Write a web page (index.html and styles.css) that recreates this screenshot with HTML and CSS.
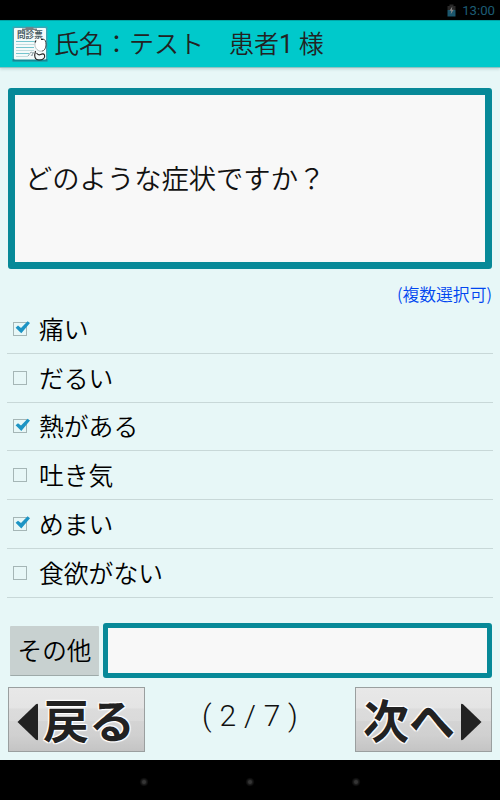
FILE: index.html
```html
<!DOCTYPE html>
<html lang="ja">
<head>
    <meta charset="UTF-8">
    <meta name="viewport" content="width=device-width, initial-scale=1.0">
    <title>問診票</title>
    <link rel="stylesheet" href="styles.css">
</head>
<body>
    <div class="status-bar">
        <svg class="battery" width="9" height="13" viewBox="0 0 9 13">
            <path d="M2.5 0.5h4v1.5h2v4h-8v-4h2z" fill="#292929"/>
            <path d="M0.5 6h8v6.5h-8z" fill="#1b566d"/>
            <path d="M5.3 2.5L2.5 6.8h1.8l-0.6 3.4 3-4.5H4.9z" fill="#8a8a8a"/>
        </svg>
        <span class="clock">13:00</span>
    </div>

    <header class="header">
        <svg class="app-icon" width="36" height="36" viewBox="0 0 36 36">
            <rect x="0.5" y="0.5" width="35" height="35" rx="1" fill="#3aa7b5"/>
            <rect x="0.5" y="33" width="35" height="2.5" fill="#128995"/>
            <rect x="2" y="2" width="32" height="31.5" rx="1" fill="#f4fafa"/>
            <path d="M10 4V2.5h3.5V1.2h8v1.3H25V4z" fill="#777f82"/>
            <text x="5" y="11.5" class="icon-text">問診票</text>
            <path d="M4 15.5h20M4 21.5h18M4 27.5h13" stroke="#74c5ce" stroke-width="1.2"/>
            <path d="M4 18.5h19M4 24.5h18M4 30.5h12" stroke="#c3dddf"/>
            <path d="M23.500 14c-2 3-1 7 1 9 2 2 5 3 7 1 3-3 2-8 0-10z" fill="#fff"/>
            <path d="M24 14.500c-2 3-1 7 1 9 1.500 1.500 3.500 2 5 1.500" fill="none" stroke="#a9b5b8" stroke-width="0.9"/>
            <path d="M30.500 13c3 0 3.500 3 3.500 5.500 0 4-2 6.500-4 6.500" fill="none" stroke="#333" stroke-width="0.9"/>
            <path d="M23 16.500l1-2M29 13.500h2M23.500 25c-1.500 5-1 9 3.500 9 4 0 6.500-2 5.500-5-1-2-3-1-4-0.500-1 0.500-3 0-4-1.500" fill="none" stroke="#222" stroke-width="1.1"/>
            <path d="M16 30l3-4 2 1-1 3M19 30l3-4" fill="none" stroke="#9aa9ad"/>
        </svg>
        <h1 class="patient">氏名：テスト　患者<span class="num">1</span> 様</h1>
    </header>

    <main class="content">
        <div class="question">どのような症状ですか？</div>
        <div class="hint">(複数選択可)</div>

        <div class="options">
            <label class="option"><input type="checkbox" checked><span>痛い</span></label>
            <label class="option"><input type="checkbox"><span>だるい</span></label>
            <label class="option"><input type="checkbox" checked><span>熱がある</span></label>
            <label class="option"><input type="checkbox"><span>吐き気</span></label>
            <label class="option"><input type="checkbox" checked><span>めまい</span></label>
            <label class="option"><input type="checkbox"><span>食欲がない</span></label>
        </div>

        <div class="other">
            <button class="other-btn">その他</button>
            <input type="text" class="other-input">
        </div>

        <div class="pager">
            <button class="nav-btn">
                <svg width="22" height="38" viewBox="0 0 22 38"><path d="M0.5 19L19 1.2Q21 0 21 2V36Q21 38 19 36.8z" fill="#222"/></svg>
                <span>戻る</span>
            </button>
            <div class="page">( 2 / 7 )</div>
            <button class="nav-btn next">
                <span>次へ</span>
                <svg width="22" height="38" viewBox="0 0 22 38"><path d="M21.5 19L3 1.2Q1 0 1 2V36Q1 38 3 36.8z" fill="#222"/></svg>
            </button>
        </div>
    </main>

    <footer class="system-bar">
        <span class="dot"></span>
        <span class="dot"></span>
        <span class="dot"></span>
    </footer>
</body>
</html>
```
FILE: styles.css
```css
* {
    box-sizing: border-box;
}
body {
    margin: 0;
    width: 500px;
    height: 800px;
    display: flex;
    flex-direction: column;
    overflow: hidden;
    background-color: #e7f7f7;
    color: #111;
    font-family: "Noto Sans CJK JP", sans-serif;
    font-weight: 350;
}
button, input {
    font-family: inherit;
    font-weight: inherit;
    margin: 0;
    padding: 0;
}
.status-bar {
    height: 20px;
    background-color: #000;
    display: flex;
    justify-content: flex-end;
    align-items: center;
    padding: 2px 5px 0 0;
    gap: 6px;
}
.battery {
    margin-top: -2px;
}
.clock {
    font-family: Roboto, sans-serif;
    font-weight: 400;
    font-size: 13.2px;
    line-height: 18px;
    color: #1d5c75;
}
.header {
    height: 48px;
    display: flex;
    align-items: center;
    padding-left: 12px;
    background-color: #00c9cb;
    border-top: 1px solid #00a5a7;
    border-bottom: 1px solid #8fc4c4;
    box-shadow: 0 1px 3px rgba(0, 60, 60, 0.2);
}
.icon-text {
    font-size: 8.6px;
    font-weight: 700;
    fill: #465a62;
}
.patient {
    margin: -2px 0 0 6px;
    font-size: 25px;
    font-weight: 350;
    line-height: 44px;
    color: #222;
    white-space: pre;
}
.num {
    font-family: Roboto, sans-serif;
    font-weight: 400;
}
.content {
    height: 692px;
    padding: 20px 8px 0;
}
.question {
    height: 181px;
    border: 7px solid #078998;
    border-radius: 3px;
    background-color: #f8f8f8;
    padding-left: 10px;
    font-size: 27.3px;
    line-height: 165px;
}
.hint {
    height: 36px;
    padding-top: 15px;
    text-align: right;
    font-size: 16.8px;
    line-height: 21px;
    color: #0046f0;
}
.options {
    display: grid;
    grid-template-rows: repeat(6, 48.8px);
    margin-right: -1px;
    margin-left: -1px;
}
.option {
    display: flex;
    align-items: center;
    border-bottom: 1px solid #c8d8d8;
    padding-left: 6px;
    font-size: 24.8px;
    line-height: 36px;
    color: #000;
}
.option span {
    margin-top: -2px;
}
.option input {
    appearance: none;
    width: 14px;
    height: 14px;
    margin-right: 12px;
    border: 1px solid #a5b6b6;
    position: relative;
}
.option input:checked::after {
    content: "";
    position: absolute;
    left: 1px;
    top: -2px;
    width: 15px;
    height: 13px;
    background-color: #1c94c4;
    clip-path: polygon(4% 52%, 20% 36%, 40% 54%, 84% 2%, 100% 16%, 42% 96%);
}
.other {
    display: flex;
    align-items: center;
    margin-top: 25px;
    padding-left: 2px;
    gap: 4px;
    height: 55px;
}
.other-btn {
    width: 89px;
    height: 50px;
    margin-top: 2px;
    padding-bottom: 3px;
    border: none;
    border-bottom: 1px solid #9eaaa9;
    border-radius: 1px;
    background-color: #c8d1d0;
    font-size: 24.6px;
    line-height: 46px;
    color: #000;
}
.other-input {
    flex: 1;
    height: 55px;
    border: 5.5px solid #078998;
    border-radius: 3px;
    background-color: #f8f8f8;
}
.pager {
    display: flex;
    justify-content: space-between;
    margin-top: 9px;
    height: 65px;
}
.nav-btn {
    display: flex;
    align-items: center;
    width: 137px;
    padding-left: 8px;
    gap: 4px;
    border: 1px solid #9a9f9f;
    background: linear-gradient(#e8e8e8 0%, #e4e4e4 32%, #dcdcdc 33%, #dadada 52%, #d4d4d4 53%, #d0d0d0 75%, #c4c4c4 100%);
    color: #222;
}
.nav-btn.next {
    gap: 5px;
    padding-left: 7px;
}
.nav-btn span {
    font-size: 46px;
    font-weight: 700;
    line-height: 60px;
    margin-top: -2px;
    white-space: nowrap;
    text-shadow: 0 0 2px #fff, 1px 1px 1px #fff, -1px -1px 1px #fff, 1px -1px 1px #fff, -1px 1px 1px #fff;
}
.nav-btn svg {
    flex: none;
    margin-top: 5px;
}
.page {
    font-size: 30px;
    line-height: 58px;
    font-family: Roboto, sans-serif;
    font-weight: 300;
    word-spacing: 0.5px;
    white-space: pre;
}
.system-bar {
    height: 40px;
    background-color: #000;
    display: flex;
    justify-content: center;
    align-items: center;
    gap: 96px;
    padding-top: 4px;
}
.dot {
    width: 10px;
    height: 10px;
    border-radius: 50%;
    background: radial-gradient(#353535 20%, #1c1c1c 35%, #000 65%);
}
```
